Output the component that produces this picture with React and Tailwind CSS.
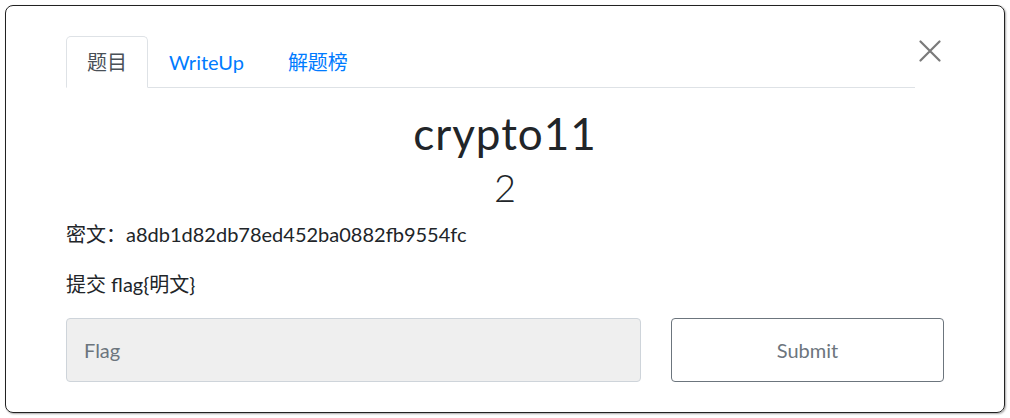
import React, { useState } from 'react'

const font = { fontFamily: 'Lato, "Noto Sans CJK SC", sans-serif' }

function App() {
    const [tab, setTab] = useState(0)
    const [flag, setFlag] = useState('')
    const tabs = ['题目', 'WriteUp', '解题榜']

    return (
        <div className="w-[1010px] h-[418px] bg-white p-[5px]" style={font}>
            <div className="h-[408px] border border-[#222] rounded-[8px] shadow-[1px_1px_2px_rgba(0,0,0,0.35)] px-[60px] pt-[30px]">
                <div className="flex items-start">
                    <ul className="flex flex-1 border-b border-[#dee2e6]">
                        {tabs.map((t, i) => (
                            <li key={i} className="-mb-px">
                                <button
                                    onClick={() => setTab(i)}
                                    className={
                                        i === tab
                                            ? 'block px-[20px] pt-[10px] pb-[10px] text-[20px] leading-[30px] text-[#495057] bg-white border border-[#dee2e6] border-b-white rounded-t-[5px]'
                                            : 'block px-[20px] pt-[10px] pb-[10px] text-[20px] leading-[30px] text-[#007bff] border border-transparent ' + (i === 2 ? 'ml-[2px]' : '')
                                    }
                                >
                                    {t}
                                </button>
                            </li>
                        ))}
                    </ul>
                    <button className="w-[29px] h-[31px] flex items-start justify-start pl-[4px] pt-[4px]">
                        <svg width="22" height="22" viewBox="0 0 22 22" stroke="#7a7a7a" strokeWidth="2.2" strokeLinecap="round">
                            <path d="M1.5 1.5 L20.5 20.5 M20.5 1.5 L1.5 20.5" />
                        </svg>
                    </button>
                </div>

                <div className="text-center text-[#212529]">
                    <h1 className="text-[44px] font-normal leading-[56px] mt-[17px] tracking-[1px]">crypto11</h1>
                    <h2 className="text-[38px] font-light leading-[44px] mt-[4px]">2</h2>
                </div>

                <p className="text-[20px] text-[#212529] leading-[30px] mt-[10px]">密文：a8db1d82db78ed452ba0882fb9554fc</p>
                <p className="text-[20px] text-[#212529] leading-[30px] mt-[20px]">提交 flag{'{'}明文{'}'}</p>

                <div className="flex gap-[30px] mt-[19px]">
                    <input
                        value={flag}
                        onChange={(e) => setFlag(e.target.value)}
                        placeholder="Flag"
                        className="w-[575px] h-[64px] bg-[#efefef] border border-[#ced4da] rounded-[4px] px-[17px] text-[20px] text-[#495057] placeholder:text-[#6c757d] outline-none"
                        style={font}
                    />
                    <button className="flex-1 h-[64px] border border-[#6c757d] rounded-[4px] text-[20px] text-[#6c757d]">
                        Submit
                    </button>
                </div>
            </div>
        </div>
    )
}

export default App
